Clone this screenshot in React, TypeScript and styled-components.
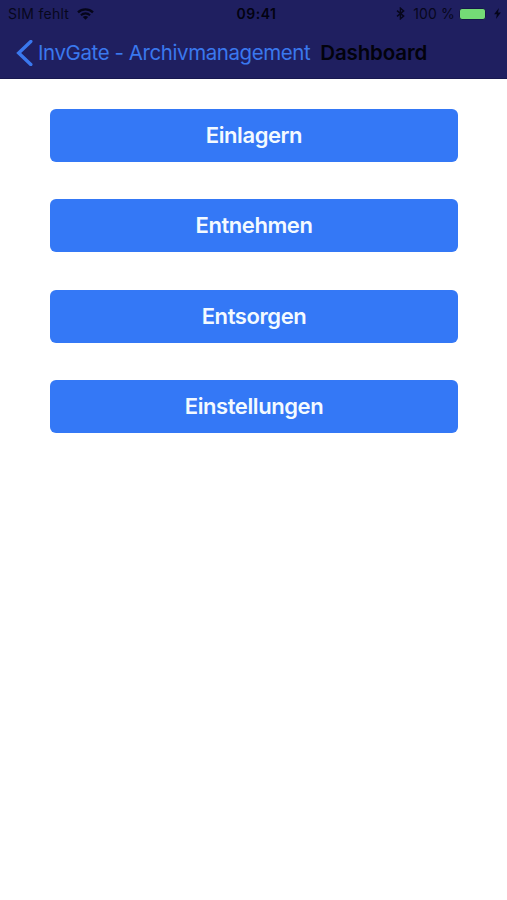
import React from "react";
import styled, { createGlobalStyle } from "styled-components";

const GlobalStyle = createGlobalStyle`
  * { box-sizing: border-box; }
  body {
    margin: 0;
    background: #fff;
    font-family: Inter, Roboto, "Liberation Sans", sans-serif;
  }
`;

const Screen = styled.div`
  display: flex;
  flex-direction: column;
  min-height: 900px;
  background: #fff;
`;

const Header = styled.header`
  height: 79px;
  background: #1f1f60;
  border-bottom: 1px solid #18184f;
`;

const StatusBar = styled.div`
  display: grid;
  grid-template-columns: 1fr auto 1fr;
  align-items: center;
  height: 27px;
  padding: 0 6px 0 8px;
  font-size: 14px;
  line-height: 27px;
  color: #07071c;
  white-space: pre;
`;

const StatusGroup = styled.div<{ $end?: boolean }>`
  display: flex;
  align-items: center;
  justify-content: ${(p) => (p.$end ? "flex-end" : "flex-start")};
`;

const Carrier = styled.span`
  letter-spacing: 0.28px;
  margin-right: 8px;
`;

const Clock = styled.span`
  font-weight: 600;
  letter-spacing: 0.5px;
  margin-left: 4px;
  color: #020210;
`;

const Percent = styled.span`
  margin: 0 4px 0 8px;
  letter-spacing: 0.15px;
`;

const Battery = styled.span`
  width: 27px;
  height: 12px;
  margin-right: 8px;
  border: 1px solid #17174a;
  border-radius: 3px;
  background: #74db76;
`;

const NavBar = styled.nav`
  display: flex;
  align-items: center;
  height: 51px;
  padding-left: 16px;
`;

const BackButton = styled.button`
  display: flex;
  align-items: center;
  padding: 0;
  border: 0;
  background: none;
  color: #3a78ee;
  font: 400 20.5px/26px Inter, Roboto, sans-serif;
  letter-spacing: -0.42px;
  white-space: nowrap;

  svg { margin-right: 5px; }
`;

const Title = styled.h1`
  margin: 0 0 0 10px;
  color: #02020c;
  font-size: 20.5px;
  font-weight: 600;
  line-height: 26px;
  letter-spacing: -0.15px;
`;

const Menu = styled.main`
  display: grid;
  grid-auto-rows: 53px;
  row-gap: 37.4px;
  padding: 30px 49px 0 50px;
`;

const MenuButton = styled.button`
  padding: 0;
  border: 0;
  border-radius: 6px;
  background: #3478f6;
  color: #f3faff;
  font: 600 22px/53px Inter, Roboto, sans-serif;
  letter-spacing: -0.42px;
`;

const WifiIcon = () => (
  <svg width="17" height="12" viewBox="0 0 17 12" fill="none" stroke="#05051a">
    <path d="M1 4.3C5.2.4 11.8.4 16 4.3" strokeWidth="2.3" />
    <path d="M3.9 7.2c2.6-2.4 6.6-2.4 9.2 0" strokeWidth="2.1" />
    <path d="M8.5 11.8 5.8 9.1c1.5-1.4 3.9-1.4 5.4 0Z" fill="#05051a" stroke="none" />
  </svg>
);

const BluetoothIcon = () => (
  <svg width="9" height="13" viewBox="0 0 9 13" fill="none" stroke="#07071c" strokeWidth="1.4">
    <path d="m1 3.6 6.7 5.5-3.3 2.8V1.1l3.3 2.8L1 9.4" />
  </svg>
);

const BoltIcon = () => (
  <svg width="7" height="11" viewBox="0 0 7 11" fill="#05051a">
    <path d="M4.9 0 .1 6.2h2.8L2 11l4.9-6.5H4Z" />
  </svg>
);

const BackIcon = () => (
  <svg width="17" height="26" viewBox="0 0 17 26" fill="none" stroke="#3a78ee" strokeWidth="3.4">
    <path d="M14.8 1.5 2.7 13l12.1 11.5" strokeLinecap="round" />
  </svg>
);

const actions = ["Einlagern", "Entnehmen", "Entsorgen", "Einstellungen"];

export default function App() {
  return (
    <Screen>
      <GlobalStyle />
      <Header>
        <StatusBar>
          <StatusGroup>
            <Carrier>SIM fehlt</Carrier>
            <WifiIcon />
          </StatusGroup>
          <Clock>09:41</Clock>
          <StatusGroup $end>
            <BluetoothIcon />
            <Percent>100 %</Percent>
            <Battery />
            <BoltIcon />
          </StatusGroup>
        </StatusBar>
        <NavBar>
          <BackButton aria-label="InvGate - Archivmanagement">
            <BackIcon />
            InvGate - Archivmanagement
          </BackButton>
          <Title>Dashboard</Title>
        </NavBar>
      </Header>
      <Menu>
        {actions.map((label) => (
          <MenuButton key={label}>{label}</MenuButton>
        ))}
      </Menu>
    </Screen>
  );
}
